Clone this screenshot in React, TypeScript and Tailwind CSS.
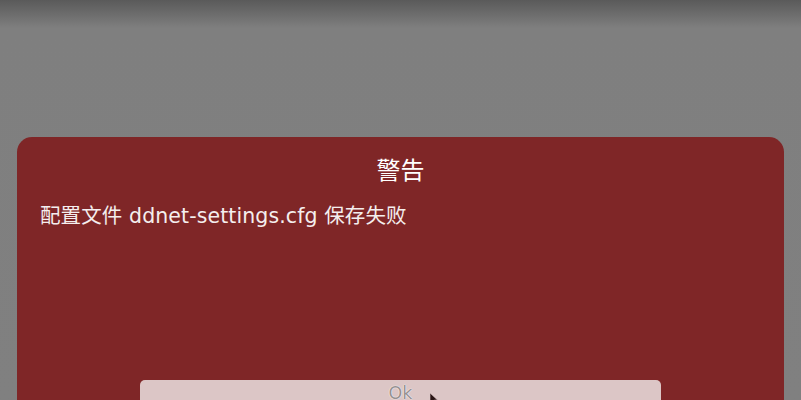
import React from "react";

const font = { fontFamily: '"DejaVu Sans", "Noto Sans CJK SC", sans-serif' };

const WarningPopup = () => {
  return (
    <div
      className="w-[801px] h-[400px] overflow-hidden bg-gradient-to-b from-[#5a5a5a] via-[#7f7f7f] via-[7%] to-[#808080] pt-[137px] px-[17px]"
      style={font}
    >
      {/* Popup panel */}
      <div className="w-[767px] h-[300px] rounded-[15px] bg-[#7f2627] flex flex-col pt-[20px] px-[23px]">
        <h1 className="text-center text-white text-[24px] leading-[28px]">警告</h1>
        <p className="mt-[19px] text-[#f4eeee] text-[20.5px] leading-[24px] tracking-[0.1px]">
          配置文件 ddnet-settings.cfg 保存失败
        </p>

        {/* Ok button */}
        <div className="relative mt-[152px] mx-auto w-[521px] h-[40px] rounded-[5px] bg-[#dcc6c6] pt-[2px] text-center">
          <span className="text-[17.5px] leading-[20px] text-[#979191] [text-shadow:0_0_1px_#ffffff,0_0_1px_#ffffff]">
            Ok
          </span>
          {/* mouse cursor */}
          <svg className="absolute left-[289px] top-[13px]" width="10" height="12" viewBox="0 0 10 12">
            <path d="M1 0 L1 10 L3.5 7.8 L5.5 11.5 L7 10.8 L5.2 7.2 L8.5 7 Z" fill="#2a1515" stroke="#dcc6c6" strokeWidth="0.6" />
          </svg>
        </div>
      </div>
    </div>
  );
};

export default function App() {
  return <WarningPopup />;
}
